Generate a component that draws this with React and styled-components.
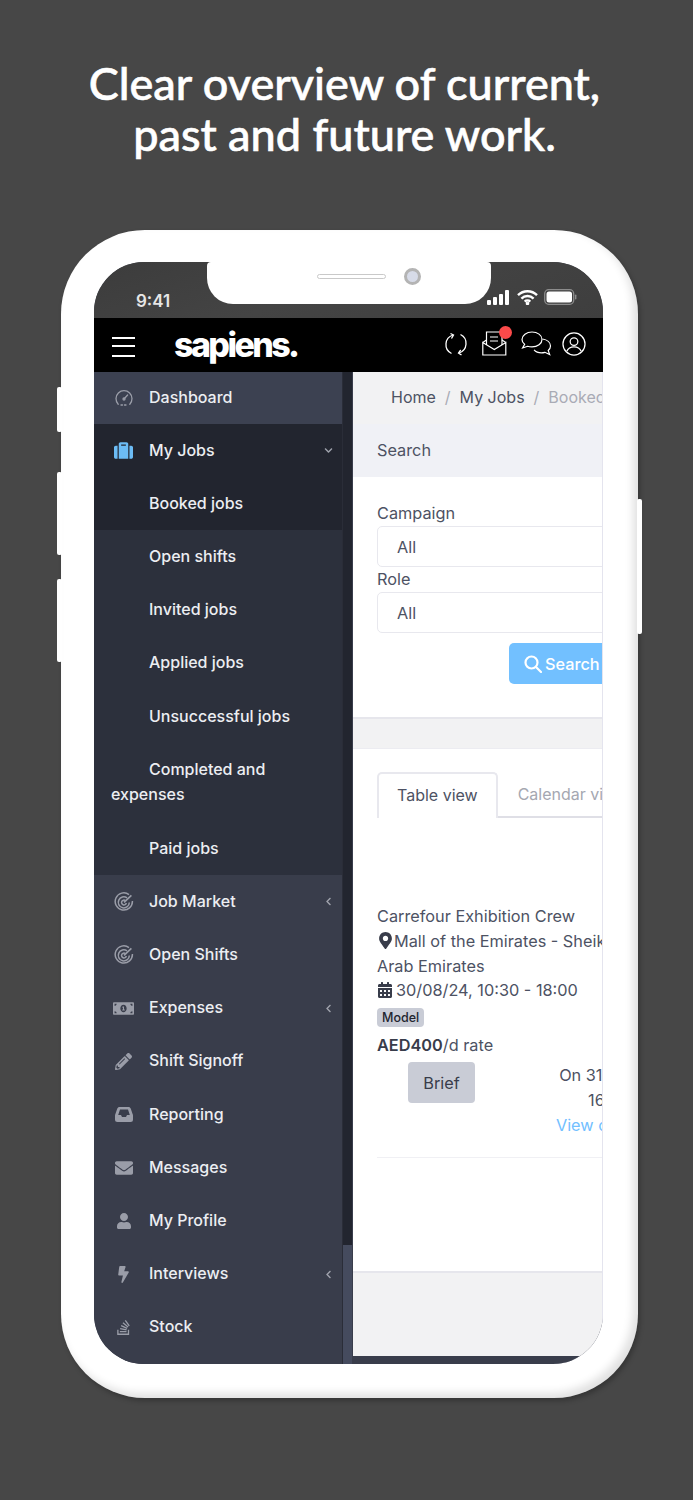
import React from "react";
import styled, { createGlobalStyle } from "styled-components";
import { FaSuitcase, FaMoneyBillAlt, FaPencilAlt, FaEnvelope, FaUser, FaBolt, FaStackOverflow, FaMapMarkerAlt, FaCalendarAlt, FaChevronDown, FaChevronLeft } from "react-icons/fa";

const Global = createGlobalStyle`
  html, body { margin: 0; padding: 0; background: #474747; }
  *, *::before, *::after { box-sizing: border-box; }
  body { font-family: Inter, "Liberation Sans", sans-serif; }
`;

const Page = styled.div`
  width: 693px;
  height: 1500px;
  background: #474747;
  overflow: hidden;
`;
const Title = styled.h1`
  margin: 0;
  padding: 58px 4px 0 0;
  height: 230px;
  text-align: center;
  color: #fff;
  font: 500 45px/51px Lato, sans-serif;
  -webkit-text-stroke: 0.6px #fff;
`;
const Phone = styled.div`
  position: relative;
  width: 577px;
  height: 1168px;
  margin-left: 61px;
  padding: 32px 35px 34px 33px;
  background: #fff;
  border-radius: 84px;
  box-shadow: inset -5px -5px 8px rgba(0,0,0,.12), 2px 3px 5px rgba(0,0,0,.25);
`;
const SideKey = styled.div`
  position: absolute;
  top: ${p => p.$top}px;
  height: ${p => p.$h}px;
  width: 5px;
  background: #fff;
  border-radius: 2px;
  ${p => (p.$right ? "right: -4px;" : "left: -4px;")}
`;
const Screen = styled.div`
  position: relative;
  height: 100%;
  border-radius: 50px;
  overflow: hidden;
  display: flex;
  flex-direction: column;
  background: #393d4b;
`;
const StatusBar = styled.div`
  height: 56px;
  flex: none;
  display: flex;
  align-items: flex-start;
  justify-content: space-between;
  padding: 28px 26px 0 42px;
  background: linear-gradient(160deg, #3c3c3c, #444 45%, #3e3e3e);
`;
const Time = styled.span`
  color: #e6e6e6;
  font: 600 17px/22px Inter, sans-serif;
`;
const StatusIcons = styled.div`
  display: flex;
  align-items: center;
  gap: 6px;
  margin-top: -1px;
`;
const Notch = styled.div`
  position: absolute;
  left: 113px;
  top: 0;
  width: 284px;
  height: 42px;
  background: #fff;
  border-radius: 4px 4px 26px 26px;
  display: flex;
  align-items: center;
  gap: 18px;
  padding-left: 110px;
  padding-bottom: 13px;
  &::before {
    content: "";
    width: 69px;
    height: 5px;
    background: #fff;
    border: 1px solid #c9c9c9;
    border-radius: 3px;
  }
  &::after {
    content: "";
    width: 17px;
    height: 17px;
    border-radius: 50%;
    background: #d7dbe8;
    border: 3px solid #b4b4b4;
  }
`;
const Header = styled.header`
  height: 54px;
  flex: none;
  background: #000;
  display: flex;
  align-items: center;
  padding: 0 17px 3px 18px;
`;
const Burger = styled.div`
  width: 23px;
  height: 20px;
  margin-top: 6px;
  border-top: 2px solid #fff;
  border-bottom: 2px solid #fff;
  position: relative;
  &::after {
    content: "";
    position: absolute;
    left: 0;
    right: 0;
    top: 6.5px;
    height: 2px;
    background: #fff;
  }
`;
const Logo = styled.span`
  margin-left: 39px;
  margin-top: 2px;
  color: #fff;
  font: 800 34px/40px Inter, sans-serif;
  letter-spacing: -2.6px;
`;
const HeaderIcons = styled.div`
  margin-left: auto;
  display: flex;
  align-items: center;
  gap: 14px;
`;
const IconWrap = styled.span`
  position: relative;
  display: flex;
`;
const ChatWrap = styled.span`
  display: flex;
  margin-right: -4px;
`;
const Dot = styled.span`
  position: absolute;
  right: -5px;
  top: -5px;
  width: 13px;
  height: 13px;
  background: #fb4a4a;
  border-radius: 50%;
`;
const Body = styled.div`
  flex: 1;
  min-height: 0;
  display: flex;
`;
const Sidebar = styled.nav`
  width: 248px;
  flex: none;
  background: #393d4b;
  color: #eceef2;
  overflow: hidden;
`;
const Item = styled.div`
  display: flex;
  align-items: center;
  height: 53.2px;
  padding-left: 18px;
  font-weight: 500;
  font-size: 16px;
  line-height: 25.6px;
  background: ${p => p.$bg || "transparent"};
  &:first-child { height: 52px; padding-bottom: 1px; }
`;
const IconBox = styled.span`
  width: 23px;
  margin-right: 14px;
  flex: none;
  display: flex;
  align-items: center;
  justify-content: center;
  color: ${p => p.$color || "#9a9da8"};
`;
const Caret = styled.span`
  margin-left: auto;
  margin-right: 9px;
  display: flex;
  color: #9fa2ac;
`;
const SubItem = styled.div`
  padding: 13.6px 17px 14px;
  font-weight: 500;
  font-size: 16px;
  line-height: 25.6px;
  text-indent: 38px;
  background: ${p => (p.$active ? "#22252f" : "#2c303c")};
`;
const Scrollbar = styled.div`
  width: 10px;
  flex: none;
  background: #454b5e;
  display: flex;
  flex-direction: column;
  border-left: 1px solid #2a2d38;
  &::before {
    content: "";
    height: 873px;
    background: #22252f;
  }
`;
const Main = styled.main`
  flex: 1;
  min-width: 0;
  margin-left: 1px;
  background: #f2f2f3;
  color: #4d5263;
  font-size: 16.3px;
  line-height: 26px;
  overflow: hidden;
  border-right: 1px solid #e4e4ee;
  display: flex;
  flex-direction: column;
  border-bottom: 8px solid #393d4b;
`;
const Crumbs = styled.div`
  height: 52px;
  flex: none;
  display: flex;
  align-items: center;
  padding: 0 0 2px 38px;
  gap: 9px;
  font-size: 16px;
  white-space: nowrap;
`;
const Sep = styled.span`
  color: #a9abb5;
`;
const Dim = styled.span`
  color: #a9abb5;
`;
const Card = styled.section`
  width: 280px;
  flex: none;
  background: #fff;
  border-bottom: 2px solid #e6e6ec;
`;
const CardHead = styled.div`
  height: 53px;
  display: flex;
  align-items: center;
  padding: 0 0 2px 24px;
  background: #f0f1f6;
`;
const SearchBody = styled.div`
  height: 240px;
  padding: 24px 0 0 24px;
  display: flex;
  flex-direction: column;
`;
const Label = styled.span`
  line-height: 25px;
`;
const Field = styled.div`
  height: 41px;
  border: 1px solid #e8e8ee;
  border-radius: 5px;
  padding: 1px 0 0 19px;
  display: flex;
  align-items: center;
  width: 256px;
`;
const SearchBtn = styled.button`
  align-self: flex-end;
  width: 100px;
  height: 41px;
  margin-top: 10px;
  margin-right: 24px;
  border: 0;
  border-radius: 5px;
  background: #72c0ff;
  color: #fff;
  font: inherit;
  font-weight: 500;
  display: flex;
  align-items: center;
  gap: 3px;
  padding: 0 0 0 15px;
`;
const Gap = styled.div`
  height: 29px;
  flex: none;
`;
const JobsCard = styled(Card)`
  height: 525px;
  border-top: 1px solid #ececf1;
  padding: 23px 0 0 24px;
`;
const Tabs = styled.div`
  display: flex;
  height: 46px;
  border-bottom: 2px solid #dfdfe6;
  white-space: nowrap;
  font-size: 16px;
`;
const Tab = styled.div`
  padding: 9px 20px 0;
  color: #a5a7b1;
`;
const ActiveTab = styled(Tab)`
  padding: 8px 18px 0;
  color: #4d5263;
  background: #fff;
  border: 2px solid #e8e8ee;
  border-bottom: 0;
  border-radius: 5px 5px 0 0;
  margin-bottom: -2px;
`;
const Job = styled.div`
  margin-top: 85px;
  padding-bottom: 19px;
  border-bottom: 1px solid #f0f0f4;
`;
const Line = styled.div`
  display: flex;
  align-items: center;
  gap: ${p => p.$gap || 0}px;
  height: 25px;
  white-space: nowrap;
  svg { flex: none; }
`;
const DateLine = styled(Line)`
  margin-top: -1px;
`;
const Tag = styled.span`
  display: inline-block;
  margin-top: 6px;
  padding: 0 5px;
  height: 19px;
  line-height: 19px;
  background: #c9ccd6;
  border-radius: 4px;
  color: #22252f;
  font-size: 12.5px;
  font-weight: 500;
`;
const Rate = styled.div`
  margin-top: 3px;
  height: 26px;
  b { font-weight: 600; color: #383c4a; }
`;
const Actions = styled.div`
  display: flex;
  margin-top: 4px;
`;
const Brief = styled.button`
  margin-left: 31px;
  width: 67px;
  height: 41px;
  border: 0;
  border-radius: 4px;
  background: #c9ccd6;
  color: #383c4a;
  font: inherit;
  flex: none;
`;
const Meta = styled.div`
  margin-left: 75px;
  margin-top: 1px;
  width: 118px;
  flex: none;
  text-align: center;
  white-space: nowrap;
  line-height: 25px;
`;
const MetaLink = styled.div`
  color: #72c0ff;
`;

const Gauge = () => (
  <svg width="20" height="20" viewBox="0 0 20 20" fill="none" stroke="currentColor" strokeWidth="1.3" strokeLinecap="round">
    <path d="M4.2 16.2A8 8 0 1 1 15.8 16.2" />
    <path d="M10 11l3.6-4" />
    <circle cx="10" cy="11" r="1" />
    <path d="M7 17h6" strokeDasharray="1.5 2" />
  </svg>
);
const Target = () => (
  <svg width="20" height="20" viewBox="0 0 20 20" fill="none" stroke="currentColor" strokeWidth="1.5">
    <path d="M15 2.6A8.6 8.6 0 1 0 18.4 9" />
    <path d="M13 5.9A5.5 5.5 0 1 0 15.3 10.4" />
    <path d="M11.4 8.6A2.4 2.4 0 1 0 12.3 11" />
    <path d="M10 10.4L17.4 3.4" strokeWidth="1.6" />
  </svg>
);
const Tray = () => (
  <svg width="18" height="15" viewBox="0 0 18 15" fill="currentColor">
    <path fillRule="evenodd" d="M4.500 0h9c1 0 1.800.6 2.200 1.500L17.600 7c.3.600.4 1.100.4 1.800V12.500A2.500 2.500 0 0 1 15.500 15h-13A2.500 2.500 0 0 1 0 12.500V8.800C0 8.100.1 7.600.4 7L2.300 1.500C2.700.6 3.500 0 4.500 0zM5 2.500L3.200 8H6l1 2h4l1-2h2.800L13 2.500z" />
  </svg>
);
const Magnifier = () => (
  <svg width="18" height="18" viewBox="0 0 18 18" fill="none" stroke="#fff" strokeWidth="2.2" strokeLinecap="round">
    <circle cx="7.500" cy="7.500" r="6" />
    <path d="M12 12l5 5" />
  </svg>
);
const Signal = () => (
  <svg width="24" height="15" viewBox="0 0 24 15" fill="#fff">
    <rect x="0" y="10" width="4" height="5" rx="1" />
    <rect x="6" y="7" width="4" height="8" rx="1" />
    <rect x="12" y="4" width="4" height="11" rx="1" />
    <rect x="18" y="0" width="4" height="15" rx="1" />
  </svg>
);
const Wifi = () => (
  <svg width="21" height="15" viewBox="0 0 21 15" fill="none" stroke="#fff" strokeWidth="2.4">
    <path d="M1 5.2a13.5 13.5 0 0 1 19 0" />
    <path d="M4.4 8.6a8.6 8.6 0 0 1 12.2 0" />
    <path d="M7.7 11.7a4 4 0 0 1 5.6 0" />
    <circle cx="10.5" cy="13.4" r=".6" fill="#fff" />
  </svg>
);
const Battery = () => (
  <svg width="33" height="16" viewBox="0 0 33 16">
    <rect x=".7" y=".7" width="29" height="14.6" rx="4" fill="none" stroke="#8c8c8c" strokeWidth="1.3" />
    <rect x="2.5" y="2.5" width="25.5" height="11" rx="2.5" fill="#fff" />
    <rect x="31" y="5.5" width="1.4" height="5" rx=".7" fill="#8c8c8c" />
  </svg>
);
const Sync = () => (
  <svg width="24" height="24" viewBox="0 0 24 24" fill="none" stroke="#fff" strokeWidth="1.3">
    <path d="M7.5 21.5A10 10 0 0 1 9 3" />
    <path d="M16.5 2.5A10 10 0 0 1 15 21" />
    <path d="M6.5 1.5L9.5 3 7.5 6.5" />
    <path d="M17.5 23l-3-2 2.2-3" />
  </svg>
);
const Mail = () => (
  <svg width="25" height="25" viewBox="0 0 25 25" fill="none" stroke="#fff" strokeWidth="1.2">
    <path d="M.8 11.5V24h23V11.5L12.3 18.5z" />
    <path d="M.8 11.5L4.5 9M23.8 11.5L20 9" />
    <path d="M4.5 14V1h15.5v13" />
    <path d="M8 6h8M8 10h8" />
  </svg>
);
const Chats = () => (
  <svg width="31" height="25" viewBox="0 0 31 25" fill="none" stroke="#fff" strokeWidth="1.2">
    <path d="M11 1C5.5 1 1 4.3 1 8.4c0 2 1 3.6 2.6 4.9L1.6 17l5-1.7c1.3.4 2.8.6 4.4.6 5.5 0 10-3.3 10-7.5S16.500 1 11 1z" />
    <path d="M21.500 8c4.500.7 8 3.400 8 7 0 1.800-.9 3.300-2.300 4.500l1.500 4-4.800-2.200c-1.100.3-2.300.5-3.500.5-3 0-5.700-1.100-7.300-3" />
  </svg>
);
const Account = () => (
  <svg width="24" height="24" viewBox="0 0 25 25" fill="none" stroke="#fff" strokeWidth="1.3">
    <circle cx="12.500" cy="12.500" r="11.500" />
    <circle cx="12.500" cy="10" r="4" />
    <path d="M5 20c1.300-3 4-4.500 7.500-4.500S18.700 17 20 20" />
  </svg>
);

const subs = [
  ["Booked jobs", true],
  ["Open shifts"],
  ["Invited jobs"],
  ["Applied jobs"],
  ["Unsuccessful jobs"],
  ["Completed and expenses"],
  ["Paid jobs"],
];
const after = [
  [<Target />, "Job Market", true],
  [<Target />, "Open Shifts"],
  [<FaMoneyBillAlt size={21} />, "Expenses", true],
  [<FaPencilAlt size={17} />, "Shift Signoff"],
  [<Tray />, "Reporting"],
  [<FaEnvelope size={18} />, "Messages"],
  [<FaUser size={16} />, "My Profile"],
  [<FaBolt size={17} />, "Interviews", true],
  [<FaStackOverflow size={17} />, "Stock"],
];

export default function App() {
  return (
    <Page>
      <Global />
      <Title>
        Clear overview of current,
        <br />
        past and future work.
      </Title>
      <Phone>
        <SideKey $top={157} $h={45} />
        <SideKey $top={242} $h={83} />
        <SideKey $top={349} $h={83} />
        <SideKey $right $top={269} $h={135} />
        <Screen>
          <StatusBar>
            <Time>9:41</Time>
            <StatusIcons>
              <Signal />
              <Wifi />
              <Battery />
            </StatusIcons>
          </StatusBar>
          <Notch />
          <Header>
            <Burger />
            <Logo>sapiens.</Logo>
            <HeaderIcons>
              <Sync />
              <IconWrap>
                <Mail />
                <Dot />
              </IconWrap>
              <ChatWrap><Chats /></ChatWrap>
              <Account />
            </HeaderIcons>
          </Header>
          <Body>
            <Sidebar>
              <Item $bg="#3c4151">
                <IconBox><Gauge /></IconBox>Dashboard
              </Item>
              <Item $bg="#22252f">
                <IconBox $color="#6cbcf5"><FaSuitcase size={19} /></IconBox>My Jobs
                <Caret><FaChevronDown size={9} /></Caret>
              </Item>
              {subs.map(([label, active]) => (
                <SubItem key={label} $active={active}>{label}</SubItem>
              ))}
              {after.map(([icon, label, caret]) => (
                <Item key={label}>
                  <IconBox>{icon}</IconBox>{label}
                  {caret && <Caret><FaChevronLeft size={9} /></Caret>}
                </Item>
              ))}
            </Sidebar>
            <Scrollbar />
            <Main>
              <Crumbs>
                <span>Home</span><Sep>/</Sep><span>My Jobs</span><Sep>/</Sep><Dim>Booked jobs</Dim>
              </Crumbs>
              <Card>
                <CardHead>Search</CardHead>
                <SearchBody>
                  <Label>Campaign</Label>
                  <Field>All</Field>
                  <Label>Role</Label>
                  <Field>All</Field>
                  <SearchBtn><Magnifier />Search</SearchBtn>
                </SearchBody>
              </Card>
              <Gap />
              <JobsCard>
                <Tabs>
                  <ActiveTab>Table view</ActiveTab>
                  <Tab>Calendar view</Tab>
                </Tabs>
                <Job>
                  <Line>Carrefour Exhibition Crew</Line>
                  <Line><FaMapMarkerAlt size={17} color="#383c4a" />Mall of the Emirates - Sheikh Zayed</Line>
                  <Line>Arab Emirates</Line>
                  <DateLine $gap={3}><FaCalendarAlt size={16} color="#383c4a" />30/08/24, 10:30 - 18:00</DateLine>
                  <Tag>Model</Tag>
                  <Rate><b>AED400</b>/d rate</Rate>
                  <Actions>
                    <Brief>Brief</Brief>
                    <Meta>
                      <div>On 31/08/24,</div>
                      <div>16:00</div>
                      <MetaLink>View contract</MetaLink>
                    </Meta>
                  </Actions>
                </Job>
              </JobsCard>
            </Main>
          </Body>
        </Screen>
      </Phone>
    </Page>
  );
}
